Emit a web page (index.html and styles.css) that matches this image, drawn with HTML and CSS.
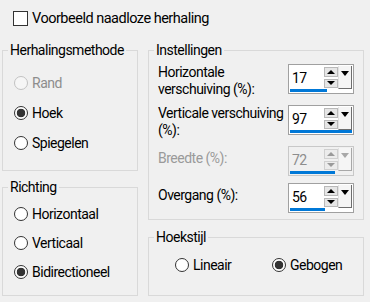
FILE: index.html
```html
<!DOCTYPE html>
<html>
<head>
<meta charset="utf-8">
<title>Naadloze herhaling</title>
<link rel="stylesheet" href="styles.css">
</head>
<body>
<div class="dialog">
    <label class="check"><span class="checkbox"></span>Voorbeeld naadloze herhaling</label>

    <div class="columns">
        <div class="column left">
            <div class="group method">
                <div class="group-title">Herhalingsmethode</div>
                <div class="options">
                    <div class="radio disabled"><span class="dot"></span>Rand</div>
                    <div class="radio checked"><span class="dot"></span>Hoek</div>
                    <div class="radio"><span class="dot"></span>Spiegelen</div>
                </div>
            </div>
            <div class="group direction">
                <div class="group-title">Richting</div>
                <div class="options">
                    <div class="radio"><span class="dot"></span>Horizontaal</div>
                    <div class="radio"><span class="dot"></span>Verticaal</div>
                    <div class="radio checked"><span class="dot"></span>Bidirectioneel</div>
                </div>
            </div>
        </div>

        <div class="column right">
            <div class="group settings">
                <div class="group-title">Instellingen</div>
                <div class="fields">
                    <div class="field-label">Horizontale<br>verschuiving (%):</div>
                    <div class="spin">
                        <div class="spin-main">
                            <div class="spin-value">17</div>
                            <div class="spin-steps"><span class="step up"></span><span class="step down"></span></div>
                            <div class="spin-drop"></div>
                        </div>
                        <div class="spin-bar" style="width: 37px;"></div>
                    </div>

                    <div class="field-label">Verticale verschuiving<br>(%):</div>
                    <div class="spin">
                        <div class="spin-main">
                            <div class="spin-value">97</div>
                            <div class="spin-steps"><span class="step up"></span><span class="step down"></span></div>
                            <div class="spin-drop"></div>
                        </div>
                        <div class="spin-bar" style="width: 62px;"></div>
                    </div>

                    <div class="field-label single disabled">Breedte (%):</div>
                    <div class="spin disabled">
                        <div class="spin-main">
                            <div class="spin-value">72</div>
                            <div class="spin-steps"><span class="step up"></span><span class="step down"></span></div>
                            <div class="spin-drop"></div>
                        </div>
                        <div class="spin-bar" style="width: 45px;"></div>
                    </div>

                    <div class="field-label single">Overgang (%):</div>
                    <div class="spin">
                        <div class="spin-main">
                            <div class="spin-value">56</div>
                            <div class="spin-steps"><span class="step up"></span><span class="step down"></span></div>
                            <div class="spin-drop"></div>
                        </div>
                        <div class="spin-bar" style="width: 35px;"></div>
                    </div>
                </div>
            </div>
            <div class="group corner">
                <div class="group-title">Hoekstijl</div>
                <div class="corner-options">
                    <div class="radio"><span class="dot"></span>Lineair</div>
                    <div class="radio checked"><span class="dot"></span>Gebogen</div>
                </div>
            </div>
        </div>
    </div>
</div>
</body>
</html>
```

FILE: styles.css
```css
body
{
    margin: 0;
    background-color: #f0f0f0;
    font-family: Roboto, "Noto Sans", sans-serif;
    font-size: 14px;
    letter-spacing: -0.5px;
    color: #000;
}
.dialog
{
    width: 370px;
    height: 302px;
}

/* checkbox on top */
.check
{
    display: flex;
    align-items: center;
    gap: 4px;
    height: 15px;
    padding: 11px 0 0 13px;
    font-size: 14.5px;
}
.checkbox
{
    width: 15px;
    height: 15px;
    box-sizing: border-box;
    border: 1px solid #333;
    background-color: #fff;
}

/* two columns of group boxes */
.columns
{
    display: flex;
    gap: 10px;
    margin: 24px 0 0 2px;
}
.column
{
    display: flex;
    flex-direction: column;
}
.left
{
    width: 136px;
    gap: 16px;
}
.right
{
    width: 216px;
    gap: 17px;
}
.group
{
    box-sizing: border-box;
    border: 1px solid #d9d9d9;
}
.group-title
{
    width: fit-content;
    margin: -9px 0 0 5px;
    padding: 0 2px;
    line-height: 17px;
    background-color: #f0f0f0;
}
.method { height: 121px; }
.direction { height: 109px; }
.settings { height: 170px; }
.corner { height: 59px; }

/* radio buttons */
.options
{
    padding: 9px 0 0 11px;
}
.direction .options
{
    padding-top: 3px;
}
.radio
{
    display: flex;
    align-items: center;
    gap: 4px;
    height: 30px;
}
.direction .radio
{
    height: 29px;
}
.dot
{
    width: 14px;
    height: 14px;
    box-sizing: border-box;
    border: 1px solid #333;
    border-radius: 50%;
    background-color: #fff;
}
.radio.checked .dot
{
    background: radial-gradient(circle, #333 0 4px, #fff 4.6px);
}
.radio.disabled
{
    color: #8d8d8d;
}
.radio.disabled .dot
{
    border-color: #c2c2c2;
    background-color: #f6f6f6;
}
.corner-options
{
    display: grid;
    grid-template-columns: 97px auto;
    padding: 4px 0 0 26px;
}

/* settings with spin boxes */
.fields
{
    display: grid;
    grid-template-columns: 1fr 66px;
    row-gap: 7px;
    padding: 5px 9px 0 9px;
}
.field-label
{
    line-height: 17px;
}
.field-label.single
{
    padding-top: 4px;
}
.field-label.disabled
{
    color: #9a9a9a;
}
.spin
{
    display: grid;
    grid-template-rows: 1fr 3px;
    width: 66px;
    height: 30px;
    box-sizing: border-box;
    padding: 1px;
    border: 1px solid #a0a0a0;
    background-color: #fff;
}
.spin-main
{
    display: flex;
    min-height: 0;
}
.spin-value
{
    flex: 1;
    padding-left: 2px;
    line-height: 25px;
}
.spin-steps
{
    display: flex;
    flex-direction: column;
    gap: 2px;
    width: 14px;
    padding: 1px 0;
    box-sizing: border-box;
}
.step
{
    flex: 1;
    display: flex;
    align-items: center;
    justify-content: center;
    border: 1px solid #b9b9b9;
    background-color: #e6e6e6;
}
.step::before
{
    content: "";
    border-left: 4px solid transparent;
    border-right: 4px solid transparent;
}
.step.up::before
{
    border-bottom: 4px solid #000;
}
.step.down::before
{
    border-top: 4px solid #000;
}
.spin-drop
{
    display: flex;
    justify-content: center;
    width: 14px;
    box-sizing: border-box;
    padding-top: 5px;
    border-left: 1px solid #e2e2e2;
    border-right: 1px solid #6e6e6e;
    border-bottom: 1px solid #6e6e6e;
    background-color: #f5f5f5;
}
.spin-drop::before
{
    content: "";
    height: 0;
    border-left: 4px solid transparent;
    border-right: 4px solid transparent;
    border-top: 5px solid #000;
}
.spin-bar
{
    background-color: #0078d7;
}
.spin.disabled
{
    border-color: #c8c8c8;
    background-color: #f0f0f0;
}
.spin.disabled .spin-value
{
    color: #8d8d8d;
}
.spin.disabled .step
{
    border-color: #d0d0d0;
    background-color: #ececec;
}
.spin.disabled .step.up::before
{
    border-bottom-color: #9a9a9a;
}
.spin.disabled .step.down::before
{
    border-top-color: #9a9a9a;
}
.spin.disabled .spin-drop
{
    border-right-color: #a8a8a8;
    border-bottom-color: #a8a8a8;
}
.spin.disabled .spin-drop::before
{
    border-top-color: #a8a8a8;
}
```
